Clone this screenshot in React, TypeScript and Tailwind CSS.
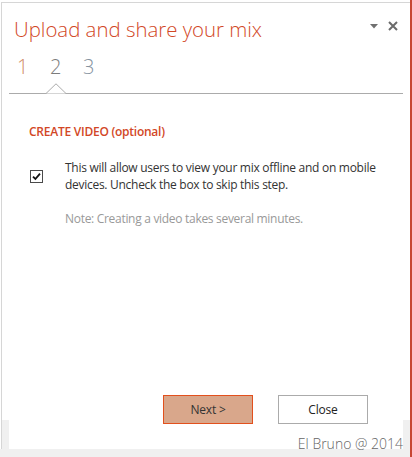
import React from 'react';

const font = { fontFamily: '"Open Sans", "Noto Sans", Arial, sans-serif' };

function Steps() {
  return (
    <div className="relative h-[51px] border-b border-[#ababab] pt-[10px] pl-[8px] flex">
      <span className="w-[33px] text-[20px] leading-[28px] font-light text-[#d08a66]">1</span>
      <span className="w-[33px] text-[20px] leading-[28px] font-light text-[#7c7c7c]">2</span>
      <span className="w-[33px] text-[20px] leading-[28px] font-light text-[#8693a0]">3</span>
      {/* notch under the current step */}
      <svg className="absolute left-[37px] bottom-[-1px]" width="20" height="11" viewBox="0 0 20 11">
        <path d="M0 10.5 L10 0.8 L20 10.5" fill="#fff" stroke="#ababab" strokeWidth="1" />
      </svg>
    </div>
  );
}

function CheckBox() {
  return (
    <svg width="13" height="13" viewBox="0 0 13 13" className="shrink-0">
      <rect x="0.5" y="0.5" width="12" height="12" fill="#fff" stroke="#4a4a4a" />
      <path d="M3 6.6 L5.4 9 L10 3.6" fill="none" stroke="#111" strokeWidth="1.8" />
    </svg>
  );
}

export default function App() {
  return (
    <div
      className="relative w-[412px] h-[457px] pl-[1px] pt-[2px] bg-white border-r-2 border-[#c74634] flex flex-col"
      style={font}
    >
      <div className="flex-1 flex flex-col border-t border-l border-[#d6d6d6]">
        {/* Header */}
        <div className="h-[40px] flex justify-between pl-[12px] pr-[12px]">
          <h1 className="pt-[12px] text-[20.4px] leading-[28px] font-light text-[#d24726] whitespace-nowrap">
            Upload and share your mix
          </h1>
          <div className="flex items-start gap-[10px] pt-[18px]">
            <svg width="8" height="5" viewBox="0 0 8 5" className="mt-[3px]">
              <path d="M0 0 H8 L4 4.5 Z" fill="#707070" />
            </svg>
            <svg width="10" height="10" viewBox="0 0 10 10">
              <path d="M1 1 L9 9 M9 1 L1 9" stroke="#6b6b6b" strokeWidth="2" />
            </svg>
          </div>
        </div>

        {/* Body */}
        <div className="flex-1 flex">
          <div className="w-[7px] flex flex-col justify-end">
            <div className="h-[29px] bg-[#f0f0f0]" />
          </div>
          <div className="w-[394px] flex flex-col bg-white">
            <Steps />
            <h2 className="mt-[30px] pl-[20px] text-[12px] leading-[16px] font-semibold tracking-[-0.25px] text-[#d24726]">
              CREATE VIDEO (optional)
            </h2>
            <div className="mt-[19px] flex items-center pl-[21px] gap-[22px]">
              <CheckBox />
              <p className="text-[12px] leading-[17px] tracking-[-0.28px] text-[#333]">
                This will allow users to view your mix offline and on mobile
                <br />
                devices. Uncheck the box to skip this step.
              </p>
            </div>
            <p className="mt-[17px] pl-[56px] text-[12px] leading-[17px] tracking-[-0.3px] text-[#999]">
              Note: Creating a video takes several minutes.
            </p>
            <div className="flex-1" />
            <div className="flex justify-end gap-[25px] pr-[35px] mb-[25px]">
              <button className="w-[90px] h-[29px] bg-[#d9a78b] border border-[#e2501d] text-[12px] tracking-[-0.2px] text-[#333]">
                Next &gt;
              </button>
              <button className="w-[90px] h-[29px] bg-white border border-[#ababab] text-[12px] tracking-[-0.2px] text-[#222]">
                Close
              </button>
            </div>
          </div>
          <div className="flex-1 flex flex-col justify-end">
            <div className="h-[29px] bg-[#f0f0f0]" />
          </div>
        </div>
      </div>
      <div className="h-[8px] bg-[#f0f0f0] -ml-[1px]" />

      {/* watermark */}
      <span className="absolute right-[7px] top-[434px] text-[14px] leading-[20px] font-light text-[#666] whitespace-nowrap">
        El Bruno @ 2014
      </span>
    </div>
  );
}
